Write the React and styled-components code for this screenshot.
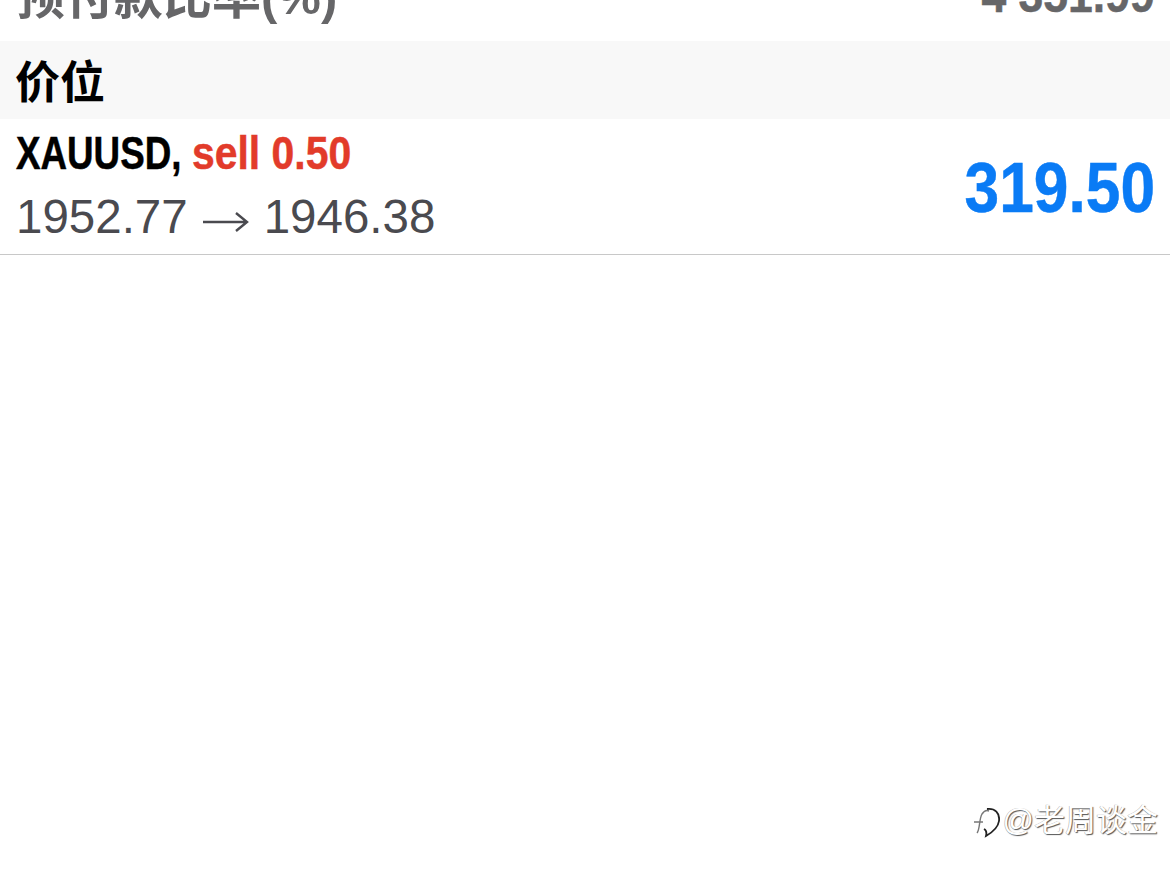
import React from "react";
import styled, { createGlobalStyle } from "styled-components";

const Global = createGlobalStyle`
  html, body { margin: 0; padding: 0; background: #fff; }
  body { font-family: "Liberation Sans", "Noto Sans CJK SC", sans-serif; }
`;

const Page = styled.div`
  position: relative;
  width: 1170px;
  height: 873px;
  overflow: hidden;
  background: #fff;
`;

const ClippedRow = styled.div`
  height: 41px;
  padding: 0 15px 0 16px;
  display: flex;
  justify-content: space-between;
  align-items: flex-end;
  overflow: hidden;
  color: #666668;
  font-weight: 700;
`;

const ClippedLabel = styled.div`
  font-size: 49px;
  line-height: 52px;
  margin-bottom: 18px;
  flex: none;
  white-space: nowrap;
`;

const Squeezed = styled.div`
  flex: none;
  white-space: nowrap;
  font-weight: 700;
  -webkit-text-stroke: 0.5px currentColor;
  transform: scaleX(${(p) => p.$x});
  transform-origin: ${(p) => p.$origin || "left"} center;
`;

const ClippedValue = styled(Squeezed)`
  font-size: 50px;
  line-height: 52px;
  margin-bottom: 20px;
`;

const SectionHeader = styled.div`
  height: 76px;
  padding: 0 15px 2px;
  display: flex;
  align-items: center;
  background: #f8f8f8;
  color: #000;
  font-size: 45px;
  font-weight: 700;
`;

const TradeRow = styled.div`
  height: 135px;
  padding: 0 15px 0 16px;
  display: flex;
  justify-content: space-between;
  align-items: center;
  box-sizing: content-box;
  border-bottom: 1px solid #c8c8c8;
`;

const TradeInfo = styled.div`
  display: flex;
  flex-direction: column;
  gap: 10px;
  margin-top: -4px;
`;

const Title = styled(Squeezed)`
  font-size: 47px;
  line-height: 54px;
  color: #000;
`;

const Side = styled.span`
  display: inline-block;
  color: #e23b2a;
  transform: scaleX(1.113);
  transform-origin: left center;
`;

const Prices = styled.div`
  font-size: 47.5px;
  line-height: 54px;
  color: #4a4a4f;
  white-space: nowrap;
`;

const Arrow = styled.svg`
  width: 46px;
  height: 24px;
  margin: 0 15px 0 15px;
  vertical-align: -1px;
`;

const Profit = styled(Squeezed)`
  font-size: 70px;
  line-height: 80px;
  margin-top: 2px;
  color: #0a7bf5;
`;

const Watermark = styled.div`
  position: absolute;
  right: 12px;
  top: 802px;
  display: flex;
  align-items: center;
  gap: 3px;
  font-size: 31px;
  line-height: 38px;
  color: #fff;
  text-shadow: 1px 1px 1px #555, -0.5px -0.5px 0.5px #aaa;
`;

const WatermarkLogo = styled.svg`
  width: 28px;
  height: 38px;
`;

export default function App() {
  return (
    <Page>
      <Global />
      <ClippedRow>
        <ClippedLabel>预付款比率(%)</ClippedLabel>
        <ClippedValue $x={0.89} $origin="right">4 351.99</ClippedValue>
      </ClippedRow>
      <SectionHeader>价位</SectionHeader>
      <TradeRow>
        <TradeInfo>
          <Title $x={0.782}>
            XAUUSD, <Side>sell 0.50</Side>
          </Title>
          <Prices>
            1952.77
            <Arrow viewBox="0 0 46 24" fill="none" stroke="#4a4a4f" strokeWidth="2.4">
              <path d="M0 12H44M33 3l11 9-11 9" />
            </Arrow>
            1946.38
          </Prices>
        </TradeInfo>
        <Profit $x={0.89} $origin="right">319.50</Profit>
      </TradeRow>
      <Watermark>
        <WatermarkLogo viewBox="0 0 28 38" fill="none">
          <path d="M5 31 C8 28 7 17 10 12 C12 9 15 8 17 9 M2 20H11" stroke="#777" strokeWidth="1.4" />
          <path d="M15 7 C23 6 28 11 27 19 C26 26 21 30 14 34 C15 30 14 28 12 27" stroke="#222" strokeWidth="1.8" />
        </WatermarkLogo>
        @老周谈金
      </Watermark>
    </Page>
  );
}
